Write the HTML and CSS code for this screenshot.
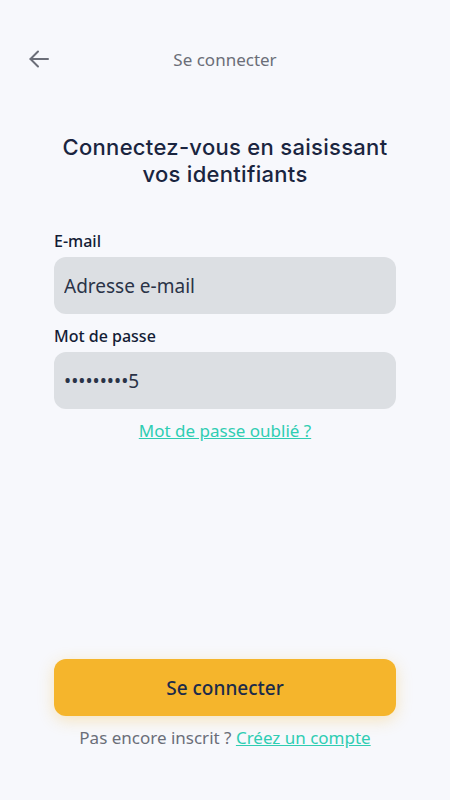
FILE: index.html
```html
<!DOCTYPE html>
<html lang="fr">
<head>
    <meta charset="UTF-8">
    <meta name="viewport" content="width=device-width, initial-scale=1.0">
    <title>Se connecter</title>
    <link rel="stylesheet" href="styles.css">
</head>
<body>
    <div class="page">
        <header class="topbar">
            <button class="back" aria-label="Retour">
                <svg width="24" height="24" viewBox="0 0 24 24" fill="none" stroke="#6b6e78" stroke-width="2" stroke-linecap="round" stroke-linejoin="round">
                    <path d="M21 12H3.5"/>
                    <path d="M11 4.5L3.5 12L11 19.5"/>
                </svg>
            </button>
            <span class="topbar-title">Se connecter</span>
        </header>

        <main class="content">
            <h1 class="title">Connectez-vous en saisissant vos identifiants</h1>

            <form class="form">
                <label class="label" for="email">E-mail</label>
                <input class="field" type="email" id="email" placeholder="Adresse e-mail">

                <label class="label" for="password">Mot de passe</label>
                <div class="field">•••••••••5</div>

                <a class="forgot" href="#">Mot de passe oublié ?</a>
            </form>
        </main>

        <footer class="bottom">
            <button class="submit">Se connecter</button>
            <p class="signup">Pas encore inscrit ? <a href="#">Créez un compte</a></p>
        </footer>
    </div>
</body>
</html>
```

FILE: styles.css
```css
body {
    margin: 0;
    padding: 0;
    background-color: #f7f8fc;
    font-family: "Noto Sans", "Open Sans", sans-serif;
    color: #111b33;
}
.page {
    min-height: 800px;
    display: flex;
    flex-direction: column;
    box-sizing: border-box;
    padding: 0 54px 51px;
}
.topbar {
    position: relative;
    height: 118px;
    display: flex;
    align-items: center;
    justify-content: center;
    margin: 0 -54px;
}
.back {
    position: absolute;
    left: 27px;
    top: 47px;
    background: none;
    border: none;
    padding: 0;
    width: 24px;
    height: 24px;
    cursor: pointer;
}
.topbar-title {
    color: #6b6e78;
    font-size: 17px;
}
.content {
    flex: 1;
}
.title {
    margin: 16px 0 42px;
    text-align: center;
    font-family: "Inter", sans-serif;
    font-weight: 500;
    font-size: 22px;
    line-height: 27px;
    color: #1a2540;
    letter-spacing: 0.3px;
}
.form {
    display: flex;
    flex-direction: column;
}
.label {
    font-size: 16px;
    font-weight: 500;
    line-height: 22px;
    margin-bottom: 5px;
    color: #131c35;
}
.field {
    box-sizing: border-box;
    height: 57px;
    width: 100%;
    border: none;
    border-radius: 12px;
    background-color: #dcdfe3;
    padding: 0 10px;
    font-family: "Noto Sans", sans-serif;
    font-size: 19px;
    color: #2a3347;
    display: flex;
    align-items: center;
    margin-bottom: 11px;
}
.field::placeholder {
    color: #2a3347;
}
.forgot {
    align-self: center;
    color: #2fcdb2;
    font-size: 17px;
    line-height: 22px;
}
.bottom {
    display: flex;
    flex-direction: column;
    align-items: center;
}
.submit {
    width: 100%;
    height: 57px;
    border: none;
    border-radius: 12px;
    background-color: #f5b52c;
    color: #1b2b4a;
    font-family: "Noto Sans", sans-serif;
    font-size: 19px;
    font-weight: 500;
    box-shadow: 0 4px 16px rgba(245, 181, 44, 0.3);
    cursor: pointer;
}
.signup {
    margin: 10px 0 0;
    font-size: 17px;
    color: #6b6e78;
}
.signup a {
    color: #2fcdb2;
}
```
